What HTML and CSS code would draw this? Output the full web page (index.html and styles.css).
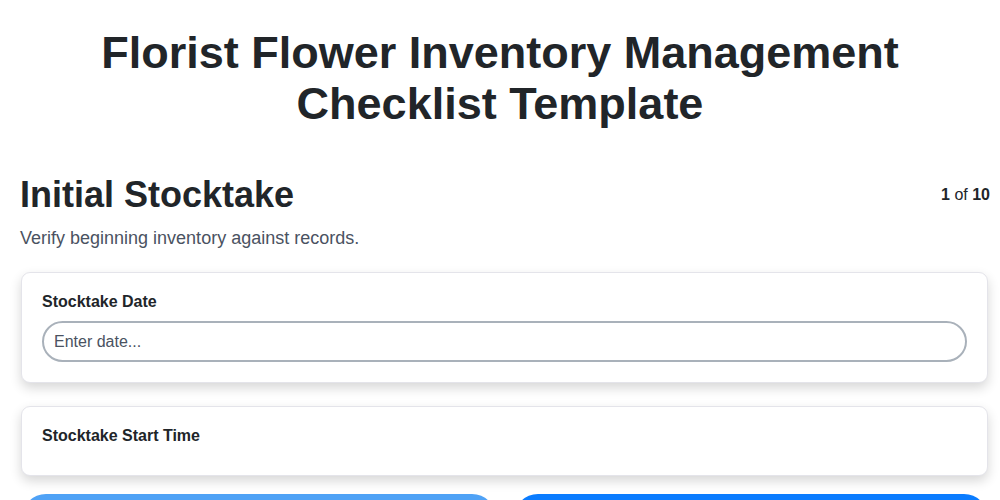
FILE: index.html
```html
<!DOCTYPE html>
<html lang="en">
<head>
<meta charset="utf-8">
<title>Florist Flower Inventory Management Checklist Template</title>
<link rel="stylesheet" href="styles.css">
</head>
<body>
<main class="page">
  <h1 class="page-title">Florist Flower Inventory Management Checklist Template</h1>
  <section class="step">
    <header class="step-head">
      <h2 class="step-title">Initial Stocktake</h2>
      <div class="step-count"><b>1</b> of <b>10</b></div>
    </header>
    <p class="step-desc">Verify beginning inventory against records.</p>
    <div class="card">
      <label class="field-label" for="date">Stocktake Date</label>
      <input class="field-input" id="date" type="text" placeholder="Enter date...">
    </div>
    <div class="card">
      <label class="field-label">Stocktake Start Time</label>
    </div>
    <div class="actions">
      <button class="btn btn-prev">Previous</button>
      <button class="btn btn-next">Next</button>
    </div>
  </section>
</main>
</body>
</html>
```

FILE: styles.css
```css
* { box-sizing: border-box; }
html, body { margin: 0; padding: 0; background: #ffffff; }
body {
  font-family: "Liberation Sans", Arial, sans-serif;
  color: #212529;
}
.page {
  padding: 0 12px 0 21px;
}
.page-title {
  margin: 27px -12px 0 -21px;
  text-align: center;
  font-size: 45px;
  line-height: 51px;
  font-weight: 700;
  color: #212529;
  padding: 0 60px;
}
.step { margin-top: 46px; }
.step-head {
  display: flex;
  justify-content: space-between;
  align-items: center;
  margin-left: -1px;
}
.step-title {
  margin: 0;
  font-size: 36px;
  line-height: 40px;
  font-weight: 700;
}
.step-count {
  font-size: 16px;
  line-height: 20px;
  margin-right: -2px;
}
.step-desc {
  margin: 12px 0 0 -1px;
  font-size: 18px;
  line-height: 22px;
  color: #4a5261;
}
.card {
  margin-top: 23px;
  background: #fff;
  border: 1px solid #e4e4ea;
  border-radius: 9px;
  padding: 20px 20px;
  box-shadow: 0 5px 12px rgba(0, 0, 0, 0.16);
}
.card + .card { margin-top: 23px; }
.field-label {
  display: block;
  font-size: 16px;
  line-height: 18px;
  font-weight: 700;
  color: #212529;
  margin-bottom: 10px;
}
.field-input {
  display: block;
  width: 100%;
  height: 41px;
  border: 2px solid #a9b1ba;
  border-radius: 21px;
  padding: 0 10px;
  font-family: "Liberation Sans", Arial, sans-serif;
  font-size: 16px;
  color: #212529;
  background: #fff;
  outline: none;
}
.field-input::placeholder { color: #4a5261; }
.actions {
  display: flex;
  gap: 18px;
  margin-top: 18px;
  padding-left: 1px;
}
.btn {
  flex: 1;
  height: 48px;
  border: none;
  border-radius: 24px;
  font-family: "Liberation Sans", Arial, sans-serif;
  font-size: 16px;
  font-weight: 700;
  color: #fff;
}
.btn-prev { background: #4fa2f6; }
.btn-next { background: #0a7cff; }
```
